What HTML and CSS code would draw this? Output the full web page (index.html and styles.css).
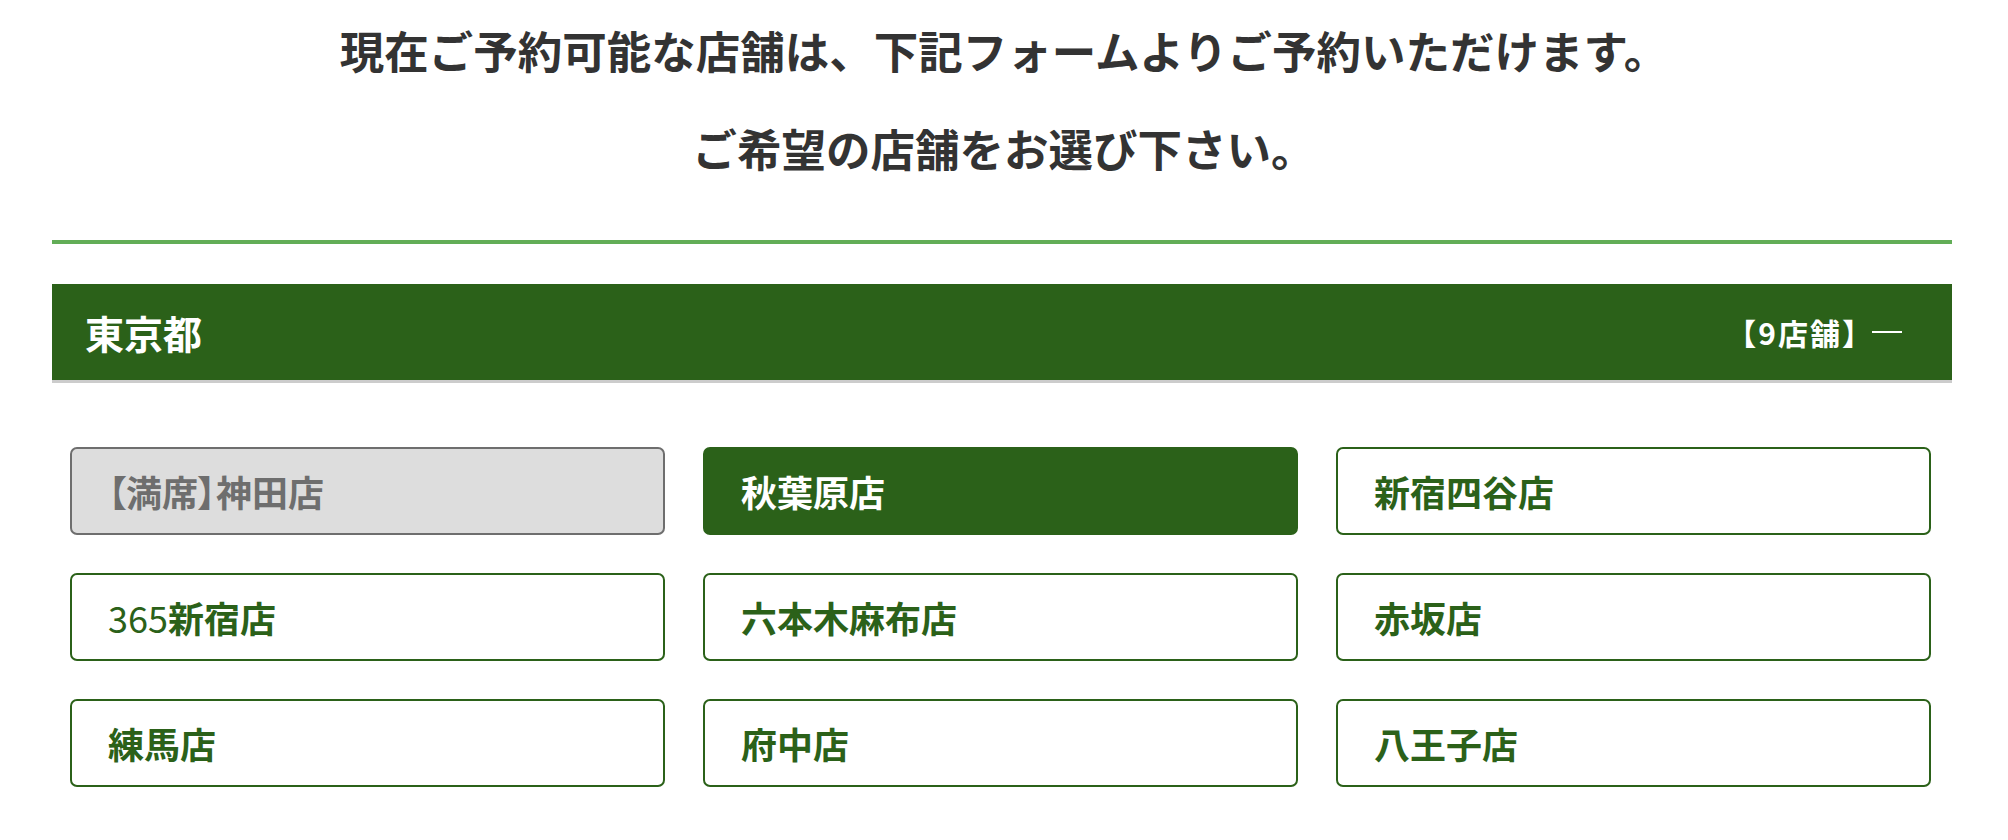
FILE: index.html
```html
<!DOCTYPE html>
<html lang="ja">
<head>
    <meta charset="UTF-8">
    <meta name="viewport" content="width=device-width, initial-scale=1.0">
    <title>店舗選択</title>
    <link rel="stylesheet" href="styles.css">
</head>
<body>
    <div class="intro">
        <p>現在ご予約可能な店舗は、下記フォームよりご予約いただけます。</p>
        <p>ご希望の店舗をお選び下さい。</p>
    </div>

    <section class="area">
        <div class="area-head">
            <h2>東京都</h2>
            <div class="area-count">【9店舗】<span class="toggle"></span></div>
        </div>

        <ul class="shops">
            <li class="shop full">【満席】神田店</li>
            <li class="shop selected">秋葉原店</li>
            <li class="shop">新宿四谷店</li>
            <li class="shop"><span class="num">365</span>新宿店</li>
            <li class="shop">六本木麻布店</li>
            <li class="shop">赤坂店</li>
            <li class="shop">練馬店</li>
            <li class="shop">府中店</li>
            <li class="shop">八王子店</li>
        </ul>
    </section>
</body>
</html>
```

FILE: styles.css
```css
body { margin: 0; font-family: "Noto Sans CJK JP", sans-serif; color: #333; background: #fff; }
.intro { text-align: center; font-size: 44.5px; font-weight: bold; line-height: 98px; padding-top: 1px; }
.intro p { margin: 0; }
.area { margin: 43px 56px 0 52px; border-top: 4px solid #62ad57; padding-top: 40px; }
.area-head { display: flex; align-items: center; justify-content: space-between; height: 96px; padding: 0 50px 0 33px; background: #2b6119; border-bottom: 3px solid #ccc; color: #fff; }
.area-head h2 { margin: 0; font-size: 39px; font-weight: bold; }
.area-count { display: flex; align-items: center; font-size: 30px; font-weight: bold; letter-spacing: 2px; }
.toggle { display: inline-block; width: 30px; height: 2px; background: #fff; margin-left: -2px; }
.shops { list-style: none; margin: 0; padding: 64px 21px 0 18px; display: grid; grid-template-columns: repeat(3, 1fr); column-gap: 38px; row-gap: 38px; }
.shop { display: flex; align-items: center; box-sizing: border-box; height: 88px; padding-left: 36px; border: 2px solid #2b6119; border-radius: 7px; color: #2b6119; font-size: 36px; font-weight: bold; }
.shop .num { font-weight: normal; }
.shop.selected { background: #2b6119; color: #fff; }
.shop.full { background: #ddd; border-color: #6e6e6e; color: #6e6e6e; font-feature-settings: "palt"; }
```
